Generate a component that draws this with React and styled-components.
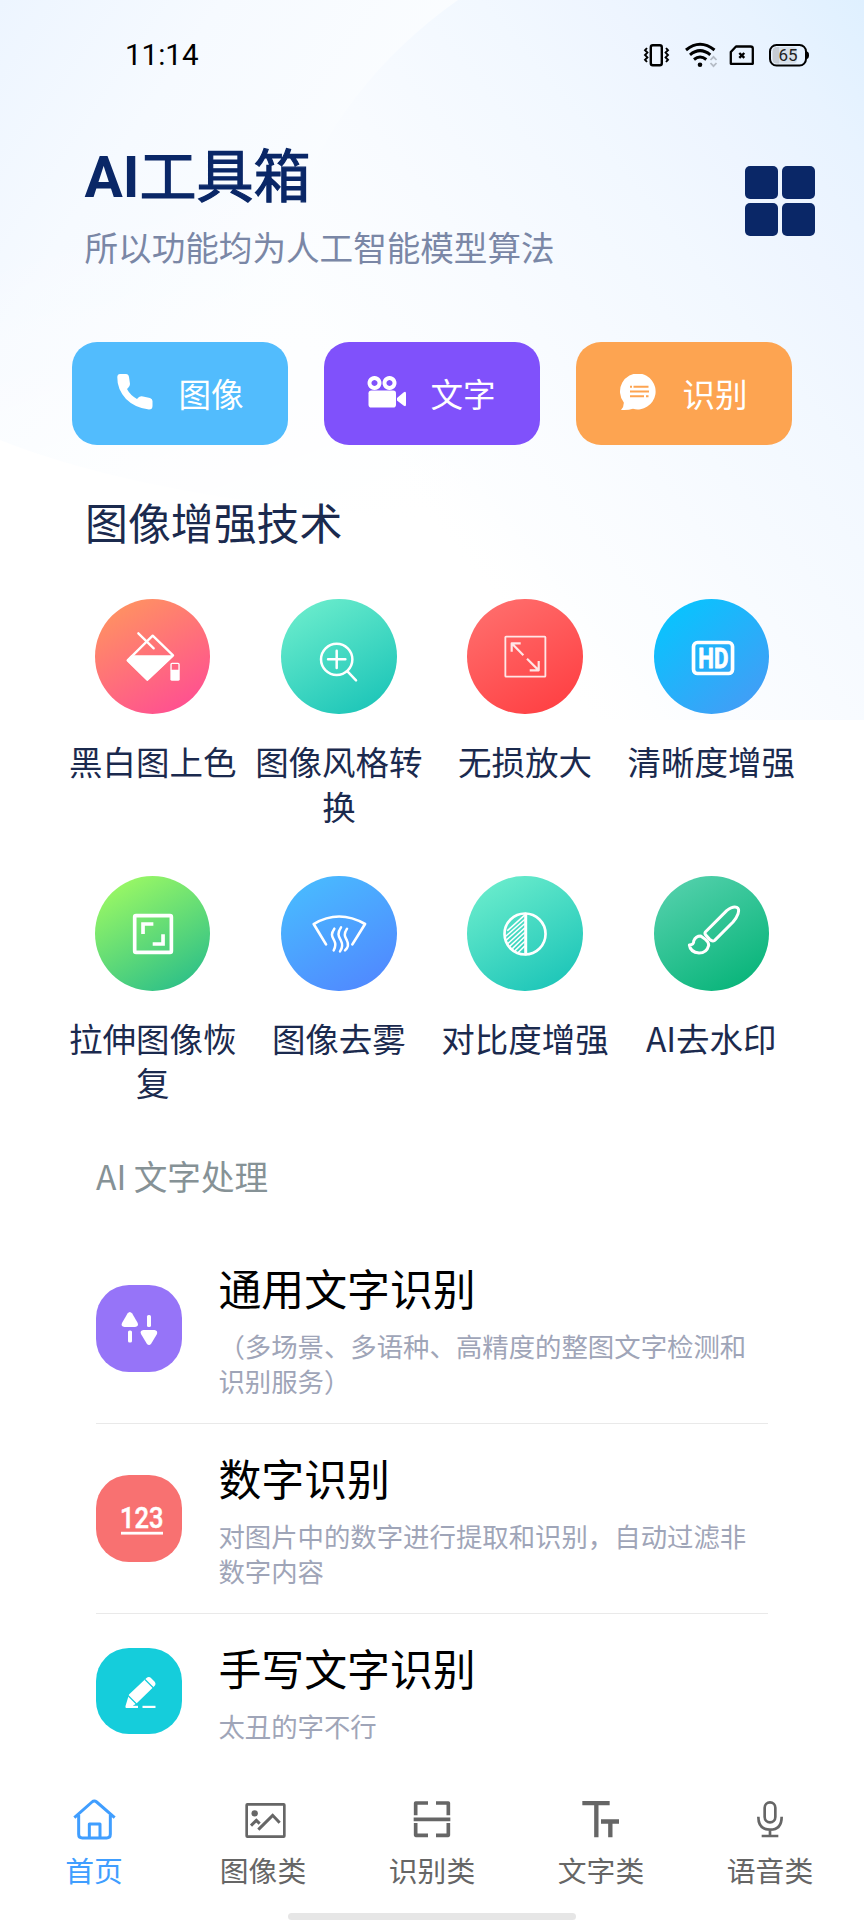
import React from "react";
import styled, { createGlobalStyle } from "styled-components";

const GlobalStyle = createGlobalStyle`
  *, *::before, *::after { box-sizing: border-box; }
  body {
    margin: 0;
    background: #fff;
    font-family: "Noto Sans CJK SC", "Noto Sans", sans-serif;
  }
  svg { display: block; flex: none; }
`;

const Page = styled.div`
  position: relative;
  display: flex;
  flex-direction: column;
  width: 864px;
  height: 1920px;
  overflow: hidden;
  background: #fff;
`;

const Backdrop = styled.svg`
  position: absolute;
  inset: 0 0 auto 0;
`;

const StatusBar = styled.div`
  position: relative;
  display: flex;
  align-items: center;
  justify-content: space-between;
  height: 110px;
  padding: 0 54px 0 125px;
`;

const Clock = styled.span`
  font-family: Roboto, "Liberation Sans", sans-serif;
  font-size: 29.5px;
  line-height: 36px;
  color: #000;
`;

const Header = styled.header`
  position: relative;
  display: flex;
  justify-content: space-between;
  align-items: flex-start;
  height: 232px;
  padding: 27px 49.5px 0 84.5px;
`;

const Title = styled.h1`
  margin: 0;
  font-family: Roboto, "Noto Sans CJK SC", sans-serif;
  font-size: 57px;
  line-height: 70px;
  font-weight: 700;
  color: #0a2767;
`;

const TitleHan = styled.span`
  font-family: "Noto Sans CJK SC", sans-serif;
  font-weight: 400;
  -webkit-text-stroke: 1.2px #0a2767;
`;

const Subtitle = styled.p`
  margin: 12px 0 0;
  font-size: 33.6px;
  line-height: 44px;
  color: #7a87a6;
`;

const MenuGrid = styled.button`
  display: grid;
  grid-template-columns: repeat(2, 32.5px);
  grid-auto-rows: 33px;
  gap: 4.5px;
  margin: 28.5px 0 0;
  padding: 0;
  border: 0;
  background: none;
`;

const MenuCell = styled.span`
  border-radius: 5px;
  background: #0a2767;
`;

const Shortcuts = styled.div`
  position: relative;
  display: flex;
  gap: 36px;
  padding: 0 72px;
`;

const Shortcut = styled.button`
  display: flex;
  align-items: center;
  width: 216px;
  height: 103px;
  padding: 0 0 0 43px;
  border: 0;
  border-radius: 25px;
  background: ${(p) => p.$color};
  color: #fff;
  font: 400 32.6px/44px "Noto Sans CJK SC", sans-serif;
  gap: 20.5px;
`;

const ShortcutLabel = styled.span`
  padding-bottom: 1.5px;
`;

const SectionTitle = styled.h2`
  position: relative;
  margin: 47px 0 0;
  padding-left: 85px;
  font-size: 42.9px;
  line-height: 58px;
  font-weight: 400;
  color: #1b2a4e;
`;

const ToolGrid = styled.div`
  position: relative;
  display: grid;
  grid-template-columns: repeat(4, 186.2px);
  grid-auto-rows: 276.7px;
  margin: 49px 0 0 59.6px;
`;

const Tool = styled.div`
  display: flex;
  flex-direction: column;
  align-items: center;
`;

const ToolDisc = styled.div`
  width: 115.4px;
  height: 115.4px;
  border-radius: 50%;
  background: linear-gradient(${(p) => p.$angle || 150}deg, ${(p) => p.$from}, ${(p) => p.$to});
`;

const ToolLabel = styled.span`
  width: 171px;
  margin-top: 25px;
  font-size: 33.5px;
  line-height: 44.2px;
  text-align: center;
  word-break: break-all;
  color: #1b2a4e;
`;

const GroupTitle = styled.h3`
  margin: 1px 0 0;
  padding-left: 96px;
  font-size: 33.6px;
  line-height: 46px;
  font-weight: 400;
  color: #869296;
`;

const List = styled.div`
  display: flex;
  flex-direction: column;
  margin: 34.6px 96px 0;
`;

const Row = styled.div`
  display: flex;
  align-items: center;
  gap: 36px;
  padding: 23px 0;
  border-bottom: 1.2px solid ${(p) => (p.$last ? "transparent" : "#e9e9e9")};
`;

const RowIcon = styled.div`
  flex: none;
  width: 86.4px;
  height: 86.4px;
  border-radius: 33px;
  background: ${(p) => p.$color};
`;

const RowText = styled.div`
  width: 545px;
  padding-bottom: 1.6px;
`;

const RowTitle = styled.div`
  font-size: 42.9px;
  line-height: 61px;
  color: #000;
`;

const RowDesc = styled.div`
  margin-top: 9.6px;
  font-size: 26.4px;
  line-height: 35.4px;
  color: #9fa5b8;
  text-spacing-trim: space-all;
`;

const TabBar = styled.nav`
  position: absolute;
  left: 0;
  right: 0;
  bottom: 0;
  display: grid;
  grid-template-columns: repeat(5, 169px);
  justify-content: center;
  height: 138px;
  padding-top: 13px;
  background: #fff;
`;

const Tab = styled.a`
  display: flex;
  flex-direction: column;
  align-items: center;
  gap: 9px;
  font-size: 28.8px;
  line-height: 36px;
  color: ${(p) => (p.$active ? "#409eff" : "#666")};
`;

const HomeIndicator = styled.div`
  position: absolute;
  left: 288px;
  bottom: 0;
  width: 288px;
  height: 7px;
  border-radius: 3.5px;
  background: #e6e6e6;
`;

/* Soft blue header art: a pale wash on the left and a large, bluer disc on the right */
const HeaderArt = () => (
  <Backdrop width="864" height="720" viewBox="0 0 864 720">
    <defs>
      <linearGradient id="wash" gradientUnits="userSpaceOnUse" x1="0" y1="0" x2="340" y2="230">
        <stop offset="0" stopColor="#edf5ff" />
        <stop offset="0.45" stopColor="#f6faff" />
        <stop offset="1" stopColor="#fbfdff" />
      </linearGradient>
      <linearGradient id="washFade" gradientUnits="userSpaceOnUse" x1="60" y1="230" x2="200" y2="600">
        <stop offset="0" stopColor="#fff" stopOpacity="0" />
        <stop offset="1" stopColor="#fff" />
      </linearGradient>
      <linearGradient id="disc" gradientUnits="userSpaceOnUse" x1="864" y1="0" x2="350" y2="420">
        <stop offset="0" stopColor="#dff0ff" />
        <stop offset="0.15" stopColor="#e8f3ff" />
        <stop offset="0.3" stopColor="#eef5ff" />
        <stop offset="0.45" stopColor="#f2f8ff" />
        <stop offset="0.7" stopColor="#f8fbff" />
        <stop offset="0.9" stopColor="#fbfdff" stopOpacity="0.7" />
        <stop offset="1" stopColor="#fdfeff" stopOpacity="0" />
      </linearGradient>
    </defs>
    <path d="M0 0H864V520H430Q150 500 0 440Z" fill="url(#wash)" />
    <path d="M0 0H864V520H0Z" fill="url(#washFade)" />
    <path d="M458 0C380 55 320 130 290 220C250 340 250 560 250 720H864V0Z" fill="url(#disc)" />
  </Backdrop>
);

const StatusIcons = () => (
  <svg width="168" height="26" viewBox="642 42 168 26" fill="none" stroke="#000">
    <rect x="650.8" y="45.2" width="11" height="20" rx="2" strokeWidth="2.4" />
    <path d="M647 48l-2 2.3 2.4 2.3-2.4 2.4 2.4 2.4-2.4 2.3 2 2.3M666 48l2 2.3-2.4 2.3 2.4 2.4-2.4 2.4 2.4 2.3-2 2.3" strokeWidth="1.9" />
    <path d="M686 50Q700 38.500 714.500 50M690 54.800Q700 46.500 710.300 54.800M694 59.500Q700 54.500 706.300 59.500" strokeWidth="3" />
    <circle cx="700" cy="64.700" r="2.300" fill="#000" stroke="none" />
    <path d="M710.500 60l3-3.200 3 3.200M710.500 63l3 3.200 3-3.200" stroke="#b5bcc6" strokeWidth="1.800" />
    <path d="M736 46.500H750.500Q752.800 46.500 752.800 48.500V63.800H730.800V52Z" strokeWidth="2.300" strokeLinejoin="round" />
    <path d="M739.300 53l5 4.800M744.300 53l-5 4.800" strokeWidth="2.400" />
    <path d="M779 47V63.500H777Q772.500 63.500 772.500 59V52Q772.500 47 777 47Z" fill="#c3cad2" stroke="none" />
    <rect x="773" y="47" width="24" height="16.500" rx="4" fill="#c8ced6" fillOpacity=".55" stroke="none" />
    <rect x="770" y="45" width="36" height="20.500" rx="6.500" strokeWidth="2" />
    <path d="M806.500 51.500q2.500 0 2.500 3.700t-2.500 3.700Z" fill="#000" stroke="none" />
    <text x="788" y="61.300" textAnchor="middle" fontFamily="Roboto, sans-serif" fontSize="17" fill="#222" stroke="none">65</text>
  </svg>
);

const PhoneIcon = () => (
  <svg width="43" height="40" viewBox="-2 0 43 40" fill="#fff">
    <path d="M3 0H9Q11.5 0 12 3L13 10Q13 12 11 14L10 15Q13 21 20 25L22 23Q24 22 26 22.500L33 24Q35.500 25 35.500 27V32Q35.500 35.500 32 35.500Q18 34 9 25Q0 15 .3 3Q.5 0 3 0Z" />
  </svg>
);

const MovieIcon = () => (
  <svg width="43" height="40" viewBox="0 2 43 40" fill="#fff">
    <path fillRule="evenodd" d="M7.500 4a7 7 0 1 0 .01 0ZM7.500 8a3 3 0 1 1-.01 0ZM22.500 4a7 7 0 1 0 .01 0ZM22.500 8a3 3 0 1 1-.01 0Z" />
    <rect x="1.500" y="18.500" width="27.500" height="17" rx="2.800" />
    <path d="M30 26L36.500 20.500Q39 18.500 39 21.500V32.500Q39 35.500 36.500 33.500L30 28.500Z" />
  </svg>
);

const ChatIcon = () => (
  <svg width="43" height="40" viewBox="-1 2 43 40">
    <path d="M19.500 1.500A18 18 0 1 1 13 36.800Q8 38.500 1 38Q4 35 3.800 30.500A18 18 0 0 1 19.500 1.500Z" fill="#fff" />
    <path d="M10 14.700h2M13.500 14.700h15M10 19.500h19M10 24.300h14M26 24.300h2.500" stroke="#fda451" strokeWidth="2" />
  </svg>
);

const DiscArt = ({ children }) => (
  <svg width="100%" height="100%" viewBox="0 0 346 346" fill="none" stroke="#fff" strokeWidth="8" strokeLinecap="round" strokeLinejoin="round">
    {children}
  </svg>
);

const tools = [
  {
    label: "黑白图上色", from: "#ff9a5c", to: "#ff4797",
    art: (
      <>
        <path d="M173 110L234 169L157 242L98 184Z" strokeWidth="7" />
        <path d="M110 171H232L157 242L98 184Z" fill="#fff" strokeWidth="5" />
        <path d="M130 103L176 148" strokeWidth="7" />
        <rect x="228" y="193" width="24" height="22" rx="3" strokeWidth="4" />
        <rect x="226" y="212" width="28" height="33" rx="4" fill="#fff" stroke="none" />
      </>
    ),
  },
  {
    label: "图像风格转换", from: "#72f0ce", to: "#14c1b6",
    art: (
      <>
        <circle cx="167" cy="181" r="47" strokeWidth="7.500" />
        <path d="M141 181H193M167 155V207M200 218L225 244" strokeWidth="7.500" />
      </>
    ),
  },
  {
    label: "无损放大", from: "#ff7270", to: "#ff3b3f",
    art: (
      <g strokeWidth="5.500" strokeOpacity=".85">
        <rect x="115" y="113" width="120" height="120" rx="2" />
        <path d="M169 169L134 133M161 133H134V158M180 179L215 214M188 214H215V186" strokeLinecap="butt" strokeWidth="6.500" />
      </g>
    ),
  },
  {
    label: "清晰度增强", from: "#00c9ff", to: "#4a98f5", angle: 140,
    art: (
      <>
        <rect x="118.5" y="130.500" width="117" height="93" rx="12" strokeWidth="11" />
        <text x="133" y="207" fontFamily="Roboto, sans-serif" fontWeight="700" fontSize="82" textLength="90" lengthAdjust="spacingAndGlyphs" fill="#fff" stroke="#fff" strokeWidth="2.500">HD</text>
      </>
    ),
  },
  {
    label: "拉伸图像恢复", from: "#a8ff60", to: "#20b98c",
    art: (
      <>
        <rect x="119" y="119" width="110" height="110" rx="4" strokeWidth="11" />
        <path d="M144 174V144H175M204 175V204H173" strokeWidth="11" strokeLinecap="butt" strokeLinejoin="miter" />
      </>
    ),
  },
  {
    label: "图像去雾", from: "#48c0ff", to: "#5183ff",
    art: (
      <>
        <path d="M135 205L98 144Q174 99 252 144L214 205" strokeWidth="8" />
        <path d="M160 158C146 178 156 184 160 194C165 204 163 214 158 223M180 154C165 176 176 184 180 194C186 206 184 216 177 226M198 158C185 178 194 184 198 194C203 204 202 214 192 223" strokeWidth="7.500" />
      </>
    ),
  },
  {
    label: "对比度增强", from: "#72f0ce", to: "#14c1b6",
    art: (
      <>
        <circle cx="174" cy="174" r="61.500" strokeWidth="8" />
        <path d="M176 114V234" strokeWidth="9" />
        <path d="M122 163L172 118M117 180L172 131M117 193L172 144M122 203L172 157M128 211L172 170M137 217L172 183M145 223L172 197M155 228L172 211" strokeWidth="4.500" />
      </>
    ),
  },
  {
    label: "AI去水印", from: "#5ad3b0", to: "#00b174",
    art: (
      <>
        <path d="M154 168L218 104Q236 90 248 94Q257 98 252 113Q247 127 237 138L182 193Q175 198 167 190L156 178Q151 173 154 168Z" strokeWidth="9" />
        <path d="M106 207Q120 206 119 195Q125 180 140 180L154 190Q164 198 164 208Q158 231 135 231Q109 229 106 207Z" strokeWidth="9" />
      </>
    ),
  },
];

const RowArt = ({ children }) => (
  <svg width="86.400" height="86.400" viewBox="0 0 86.400 86.400" fill="#fff">{children}</svg>
);

const rows = [
  {
    title: "通用文字识别",
    desc: "（多场景、多语种、高精度的整图文字检测和识别服务）",
    color: "#9674f8",
    art: (
      <>
        <path d="M31.500 28.500Q33.800 25.500 36.200 28.500L41.700 38Q43 41.500 39 42H28.500Q24.500 41.500 26 38Z" />
        <rect x="32" y="45.500" width="4" height="12" rx="1.600" />
        <rect x="51" y="30" width="4" height="12" rx="1.600" />
        <path d="M50.700 58.500Q53 61.500 55.300 58.500L61 49Q62 45.700 58.500 45H47.500Q43.500 45.500 45 49Z" />
      </>
    ),
  },
  {
    title: "数字识别",
    desc: "对图片中的数字进行提取和识别，自动过滤非数字内容",
    color: "#f87171",
    art: (
      <>
        <text x="24" y="53.500" fontFamily="Roboto, sans-serif" fontWeight="500" fontSize="30" textLength="43.500" lengthAdjust="spacingAndGlyphs" stroke="#fff" strokeWidth=".5">123</text>
        <rect x="25" y="56.800" width="42" height="2.800" />
      </>
    ),
  },
  {
    title: "手写文字识别",
    desc: "太丑的字不行",
    color: "#15cddb",
    art: (
      <>
        <path d="M33 46.500L50.500 30Q53 28 55.500 30.500L58.500 33.500Q60.500 36 58.500 38L41 55L37 57.800V60H30Q29.200 59.500 29.500 58Z" />
        <path d="M49 31.500L57.500 40M32 47.500L40.500 56" stroke="#15cddb" strokeWidth="1.200" />
        <rect x="30" y="57.800" width="12" height="2.200" />
        <rect x="46.500" y="57.800" width="13" height="2.200" />
      </>
    ),
  },
];

const TabArt = ({ children }) => (
  <svg width="48" height="48" viewBox="0 0 144 144" fill="none" stroke="currentColor" strokeWidth="9">{children}</svg>
);

const tabs = [
  {
    label: "首页", active: true,
    art: (
      <path d="M13 68L66 21Q73 15 80 21L134 68M26 60V118Q26 129 37 129H110Q121 129 121 118V60M58 129V87H90V129" strokeLinejoin="round" />
    ),
  },
  {
    label: "图像类",
    art: (
      <>
        <rect x="23" y="28" width="113" height="97" rx="2" strokeWidth="8" />
        <circle cx="47" cy="55" r="9.500" fill="currentColor" stroke="none" />
        <path d="M36 92L52 76L62 86M58 104L101 61L122 83" strokeWidth="9" />
      </>
    ),
  },
  {
    label: "识别类",
    art: (
      <path d="M60 24H23V61M84 24H121V61M17 73H127M23 84V121H60M121 84V121H84" strokeWidth="11" strokeLinejoin="round" />
    ),
  },
  {
    label: "文字类",
    art: <path d="M16 24.500H98M58 24V127M72 79.500H126M100 79V127" strokeWidth="13" />,
  },
  {
    label: "语音类",
    art: (
      <>
        <rect x="56" y="22" width="32" height="60" rx="16" strokeWidth="8" />
        <path d="M37 65Q37 104 72 104Q107 104 107 65M72 104V122M47 123H97" strokeWidth="8" />
      </>
    ),
  },
];

export default function App() {
  return (
    <Page>
      <GlobalStyle />
      <HeaderArt />
      <StatusBar>
        <Clock>11:14</Clock>
        <StatusIcons />
      </StatusBar>
      <Header>
        <div>
          <Title>AI<TitleHan>工具箱</TitleHan></Title>
          <Subtitle>所以功能均为人工智能模型算法</Subtitle>
        </div>
        <MenuGrid>
          <MenuCell /><MenuCell /><MenuCell /><MenuCell />
        </MenuGrid>
      </Header>
      <Shortcuts>
        <Shortcut $color="#52bcfd"><PhoneIcon /><ShortcutLabel>图像</ShortcutLabel></Shortcut>
        <Shortcut $color="#8051fb"><MovieIcon /><ShortcutLabel>文字</ShortcutLabel></Shortcut>
        <Shortcut $color="#fda451"><ChatIcon /><ShortcutLabel>识别</ShortcutLabel></Shortcut>
      </Shortcuts>
      <SectionTitle>图像增强技术</SectionTitle>
      <ToolGrid>
        {tools.map((t) => (
          <Tool key={t.label}>
            <ToolDisc $from={t.from} $to={t.to} $angle={t.angle}>
              <DiscArt>{t.art}</DiscArt>
            </ToolDisc>
            <ToolLabel>{t.label}</ToolLabel>
          </Tool>
        ))}
      </ToolGrid>
      <GroupTitle>AI 文字处理</GroupTitle>
      <List>
        {rows.map((r, i) => (
          <Row key={r.title} $last={i === rows.length - 1}>
            <RowIcon $color={r.color}><RowArt>{r.art}</RowArt></RowIcon>
            <RowText>
              <RowTitle>{r.title}</RowTitle>
              <RowDesc>{r.desc}</RowDesc>
            </RowText>
          </Row>
        ))}
      </List>
      <TabBar>
        {tabs.map((t) => (
          <Tab key={t.label} $active={t.active}>
            <TabArt>{t.art}</TabArt>
            {t.label}
          </Tab>
        ))}
        <HomeIndicator />
      </TabBar>
    </Page>
  );
}
